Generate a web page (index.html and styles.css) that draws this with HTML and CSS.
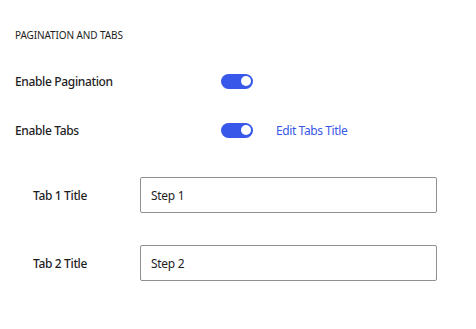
FILE: index.html
```html
<!DOCTYPE html>
<html>
<head>
<meta charset="utf-8">
<link rel="stylesheet" href="styles.css">
</head>
<body>
<div class="panel">
  <h3 class="heading">PAGINATION AND TABS</h3>
  <div class="toggle-row">
    <span class="label">Enable Pagination</span>
    <span class="toggle"><span class="knob"></span></span>
  </div>
  <div class="toggle-row second">
    <span class="label">Enable Tabs</span>
    <span class="toggle"><span class="knob"></span></span>
    <a class="link">Edit Tabs Title</a>
  </div>
  <div class="tabs">
    <div class="tab-row">
      <span class="label">Tab 1 Title</span>
      <input class="field" type="text" value="Step 1">
    </div>
    <div class="tab-row">
      <span class="label">Tab 2 Title</span>
      <input class="field" type="text" value="Step 2">
    </div>
  </div>
</div>
</body>
</html>
```
FILE: styles.css
```css
html, body {
  margin: 0;
  padding: 0;
  background: #fff;
}
body {
  font-family: "Noto Sans", "Open Sans", sans-serif;
  color: #1e1e1e;
}
.panel {
  padding: 28px 14px 0 15px;
}
.heading {
  margin: 0;
  font-size: 10px;
  line-height: 14px;
  font-weight: 400;
  letter-spacing: -0.1px;
  color: #1e1e1e;
}
.toggle-row {
  margin-top: 29px;
  height: 20px;
  display: grid;
  grid-template-columns: 206px 32px auto;
  align-items: center;
}
.toggle-row.second {
  margin-top: 29px;
}
.label {
  font-size: 12px;
  font-weight: 500;
  letter-spacing: -0.35px;
}
.toggle {
  position: relative;
  display: block;
  width: 32px;
  height: 15px;
  border-radius: 8px;
  background: #3858e9;
}
.knob {
  position: absolute;
  right: 2px;
  top: 2.5px;
  width: 10px;
  height: 10px;
  border-radius: 50%;
  background: #fff;
}
.link {
  margin-left: 23px;
  font-size: 12px;
  color: #3858e9;
  letter-spacing: -0.4px;
}
.tabs {
  margin-top: 37px;
  padding-left: 18px;
  display: flex;
  flex-direction: column;
  gap: 32px;
}
.tab-row {
  display: grid;
  grid-template-columns: 107px 297px;
  align-items: center;
  height: 36px;
}
.field {
  box-sizing: border-box;
  width: 297px;
  height: 36px;
  margin: 0;
  padding: 0 10px;
  border: 1px solid #8c8f94;
  border-radius: 2px;
  font-family: "Noto Sans", "Open Sans", sans-serif;
  font-size: 12px;
  color: #1e1e1e;
  letter-spacing: -0.3px;
  background: #fff;
  outline: none;
}
```
